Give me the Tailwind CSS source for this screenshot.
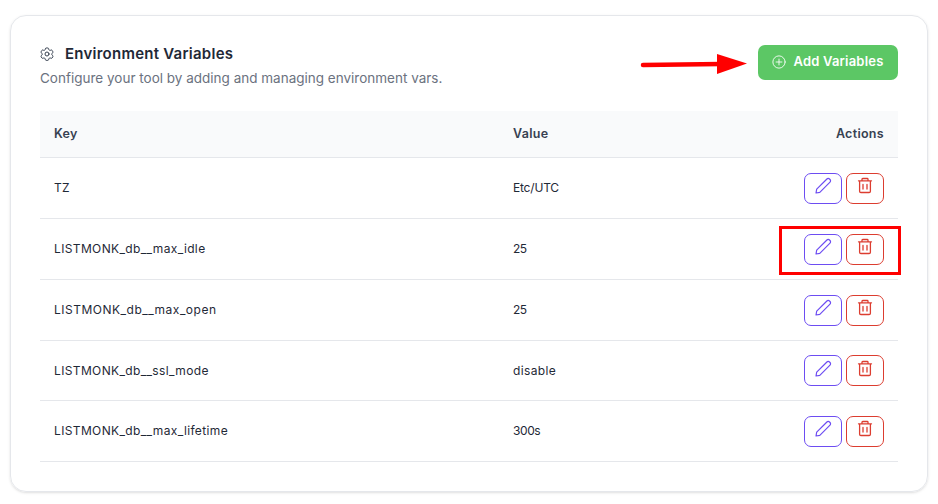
<!DOCTYPE html>
<html lang="en">
<head>
    <meta charset="UTF-8">
    <meta name="viewport" content="width=device-width, initial-scale=1.0">
    <title>Environment Variables</title>
    <script src="https://cdn.jsdelivr.net/npm/@tailwindcss/browser@4"></script>
</head>
<body class="bg-white font-['Inter',sans-serif] text-[#1f2937]">
    <div class="relative h-[504px] w-[938px] overflow-hidden pl-[10px] pt-[15px]">
        <!-- Card -->
        <div class="h-[477px] w-[918px] rounded-[16px] border border-[#e5e7eb] px-[29px] pt-[27px] shadow-sm">
            <!-- Header -->
            <div class="flex items-start justify-between">
                <div>
                    <div class="mt-px flex h-5 items-center gap-[10px]">
                        <svg class="-ml-px h-4 w-4 text-[#374151]" viewBox="0 0 24 24" fill="none" stroke="currentColor" stroke-width="1.5" stroke-linecap="round" stroke-linejoin="round">
                            <path d="M9.6 3.9c.1-.5.6-.9 1.1-.9h2.6c.5 0 1 .4 1.1.9l.2 1.3c.1.4.3.7.7.9l.6.3c.3.2.7.2 1.1.1l1.2-.5c.5-.2 1.1 0 1.4.5l1.3 2.2c.3.5.1 1.1-.3 1.4l-1 .8c-.3.2-.5.6-.5 1v.7c0 .4.2.8.5 1l1 .8c.4.3.6.9.3 1.4l-1.3 2.2c-.3.5-.9.7-1.4.5l-1.2-.5c-.4-.1-.8-.1-1.1.1l-.6.3c-.4.2-.6.5-.7.9l-.2 1.3c-.1.5-.6.9-1.1.9h-2.6c-.5 0-1-.4-1.1-.9l-.2-1.3c-.1-.4-.3-.7-.7-.9l-.6-.3c-.3-.2-.7-.2-1.1-.1l-1.2.5c-.5.2-1.1 0-1.4-.5l-1.3-2.2c-.3-.5-.1-1.1.3-1.4l1-.8c.3-.2.5-.6.5-1v-.7c0-.4-.2-.8-.5-1l-1-.8c-.4-.3-.6-.9-.3-1.4l1.3-2.2c.3-.5.9-.7 1.4-.5l1.2.5c.4.1.8.1 1.1-.1l.6-.3c.4-.2.6-.5.7-.9z"/>
                            <circle cx="12" cy="12" r="3"/>
                        </svg>
                        <h2 class="text-[15px] font-semibold tracking-[0.25px] text-[#1f2937]">Environment Variables</h2>
                    </div>
                    <p class="mt-1 text-[13.5px] leading-5 text-[#6b7280]">Configure your tool by adding and managing environment vars.</p>
                </div>
                <button class="mt-[2px] flex h-[35px] w-[140px] items-center justify-center gap-[7px] rounded-[7px] bg-[#5cc765] pb-px text-[13px] font-semibold tracking-[0.2px] text-white">
                    <svg class="h-[14px] w-[14px]" viewBox="0 0 24 24" fill="none" stroke="currentColor" stroke-width="1.5" stroke-linecap="round">
                        <circle cx="12" cy="12" r="10.5"/>
                        <path d="M12 7v10M7 12h10"/>
                    </svg>
                    Add Variables
                </button>
            </div>

            <!-- Table -->
            <div class="mt-[23px] text-[12px] tracking-[0.36px]">
                <div class="grid h-[47px] grid-cols-[459px_1fr_auto] items-center border-b border-[#e5e7eb] bg-[#f9fafb] px-[14px] text-[12.5px] font-semibold tracking-[0.3px] text-[#374151]">
                    <div>Key</div>
                    <div>Value</div>
                    <div>Actions</div>
                </div>

                <div class="grid h-[61px] grid-cols-[459px_1fr_auto] items-center border-b border-[#e5e7eb] px-[14px]">
                    <div>TZ</div>
                    <div class="tracking-[-0.2px]">Etc/UTC</div>
                    <div class="flex gap-1">
                        <button class="flex h-[31px] w-[38px] items-center justify-center rounded-[7px] border border-[#6d4df2] text-[#6d4df2]"><svg class="mb-1 h-[18px] w-[18px]" viewBox="0 0 18 18" fill="none" stroke="currentColor" stroke-width="1.2" stroke-linejoin="round"><path d="M2 16l.7-3.8L12.9 2a1.8 1.8 0 0 1 2.6 0l.5.5a1.8 1.8 0 0 1 0 2.6L5.8 15.3z"/></svg></button>
                        <button class="flex h-[31px] w-[38px] items-center justify-center rounded-[7px] border border-[#dc3d30] text-[#dc3d30]"><svg class="mb-1 h-[18px] w-[18px]" viewBox="0 0 18 18" fill="none" stroke="currentColor" stroke-width="1.3" stroke-linecap="round" stroke-linejoin="round"><path d="M2.5 3.8h13M6 3.8V2.3q0-.8.8-.8h4.4q.8 0 .8.8v1.5M3.6 3.8v10.4q0 1.3 1.3 1.3h8.2q1.3 0 1.3-1.3V3.8M7 7.5V12M11 7.5V12"/></svg></button>
                    </div>
                </div>

                <div class="grid h-[61px] grid-cols-[459px_1fr_auto] items-center border-b border-[#e5e7eb] px-[14px]">
                    <div>LISTMONK_db__max_idle</div>
                    <div class="tracking-[-0.6px]">25</div>
                    <div class="flex gap-1">
                        <button class="flex h-[31px] w-[38px] items-center justify-center rounded-[7px] border border-[#6d4df2] text-[#6d4df2]"><svg class="mb-1 h-[18px] w-[18px]" viewBox="0 0 18 18" fill="none" stroke="currentColor" stroke-width="1.2" stroke-linejoin="round"><path d="M2 16l.7-3.8L12.9 2a1.8 1.8 0 0 1 2.6 0l.5.5a1.8 1.8 0 0 1 0 2.6L5.8 15.3z"/></svg></button>
                        <button class="flex h-[31px] w-[38px] items-center justify-center rounded-[7px] border border-[#dc3d30] text-[#dc3d30]"><svg class="mb-1 h-[18px] w-[18px]" viewBox="0 0 18 18" fill="none" stroke="currentColor" stroke-width="1.3" stroke-linecap="round" stroke-linejoin="round"><path d="M2.5 3.8h13M6 3.8V2.3q0-.8.8-.8h4.4q.8 0 .8.8v1.5M3.6 3.8v10.4q0 1.3 1.3 1.3h8.2q1.3 0 1.3-1.3V3.8M7 7.5V12M11 7.5V12"/></svg></button>
                    </div>
                </div>

                <div class="grid h-[61px] grid-cols-[459px_1fr_auto] items-center border-b border-[#e5e7eb] px-[14px]">
                    <div class="tracking-[0.5px]">LISTMONK_db__max_open</div>
                    <div class="tracking-[-0.6px]">25</div>
                    <div class="flex gap-1">
                        <button class="flex h-[31px] w-[38px] items-center justify-center rounded-[7px] border border-[#6d4df2] text-[#6d4df2]"><svg class="mb-1 h-[18px] w-[18px]" viewBox="0 0 18 18" fill="none" stroke="currentColor" stroke-width="1.2" stroke-linejoin="round"><path d="M2 16l.7-3.8L12.9 2a1.8 1.8 0 0 1 2.6 0l.5.5a1.8 1.8 0 0 1 0 2.6L5.8 15.3z"/></svg></button>
                        <button class="flex h-[31px] w-[38px] items-center justify-center rounded-[7px] border border-[#dc3d30] text-[#dc3d30]"><svg class="mb-1 h-[18px] w-[18px]" viewBox="0 0 18 18" fill="none" stroke="currentColor" stroke-width="1.3" stroke-linecap="round" stroke-linejoin="round"><path d="M2.5 3.8h13M6 3.8V2.3q0-.8.8-.8h4.4q.8 0 .8.8v1.5M3.6 3.8v10.4q0 1.3 1.3 1.3h8.2q1.3 0 1.3-1.3V3.8M7 7.5V12M11 7.5V12"/></svg></button>
                    </div>
                </div>

                <div class="grid h-[60px] grid-cols-[459px_1fr_auto] items-center border-b border-[#e5e7eb] px-[14px]">
                    <div>LISTMONK_db__ssl_mode</div>
                    <div>disable</div>
                    <div class="flex gap-1">
                        <button class="flex h-[31px] w-[38px] items-center justify-center rounded-[7px] border border-[#6d4df2] text-[#6d4df2]"><svg class="mb-1 h-[18px] w-[18px]" viewBox="0 0 18 18" fill="none" stroke="currentColor" stroke-width="1.2" stroke-linejoin="round"><path d="M2 16l.7-3.8L12.9 2a1.8 1.8 0 0 1 2.6 0l.5.5a1.8 1.8 0 0 1 0 2.6L5.8 15.3z"/></svg></button>
                        <button class="flex h-[31px] w-[38px] items-center justify-center rounded-[7px] border border-[#dc3d30] text-[#dc3d30]"><svg class="mb-1 h-[18px] w-[18px]" viewBox="0 0 18 18" fill="none" stroke="currentColor" stroke-width="1.3" stroke-linecap="round" stroke-linejoin="round"><path d="M2.5 3.8h13M6 3.8V2.3q0-.8.8-.8h4.4q.8 0 .8.8v1.5M3.6 3.8v10.4q0 1.3 1.3 1.3h8.2q1.3 0 1.3-1.3V3.8M7 7.5V12M11 7.5V12"/></svg></button>
                    </div>
                </div>

                <div class="grid h-[61px] grid-cols-[459px_1fr_auto] items-center border-b border-[#e5e7eb] px-[14px]">
                    <div>LISTMONK_db__max_lifetime</div>
                    <div class="tracking-[-0.4px]">300s</div>
                    <div class="flex gap-1">
                        <button class="flex h-[31px] w-[38px] items-center justify-center rounded-[7px] border border-[#6d4df2] text-[#6d4df2]"><svg class="mb-1 h-[18px] w-[18px]" viewBox="0 0 18 18" fill="none" stroke="currentColor" stroke-width="1.2" stroke-linejoin="round"><path d="M2 16l.7-3.8L12.9 2a1.8 1.8 0 0 1 2.6 0l.5.5a1.8 1.8 0 0 1 0 2.6L5.8 15.3z"/></svg></button>
                        <button class="flex h-[31px] w-[38px] items-center justify-center rounded-[7px] border border-[#dc3d30] text-[#dc3d30]"><svg class="mb-1 h-[18px] w-[18px]" viewBox="0 0 18 18" fill="none" stroke="currentColor" stroke-width="1.3" stroke-linecap="round" stroke-linejoin="round"><path d="M2.5 3.8h13M6 3.8V2.3q0-.8.8-.8h4.4q.8 0 .8.8v1.5M3.6 3.8v10.4q0 1.3 1.3 1.3h8.2q1.3 0 1.3-1.3V3.8M7 7.5V12M11 7.5V12"/></svg></button>
                    </div>
                </div>
            </div>
        </div>

        <!-- Annotations drawn over the screenshot -->
        <svg class="absolute left-[636px] top-[50px] h-[30px] w-[120px]" viewBox="0 0 120 30">
            <path d="M7 15 L85 14" stroke="#ff0000" stroke-width="4.5" stroke-linecap="round"/>
            <path d="M81 4 L111 13.5 L81 24 Z" fill="#ff0000"/>
        </svg>
        <div class="absolute left-[779px] top-[226px] h-[49px] w-[122px] border-[3px] border-[#ff0000]"></div>
    </div>
</body>
</html>
